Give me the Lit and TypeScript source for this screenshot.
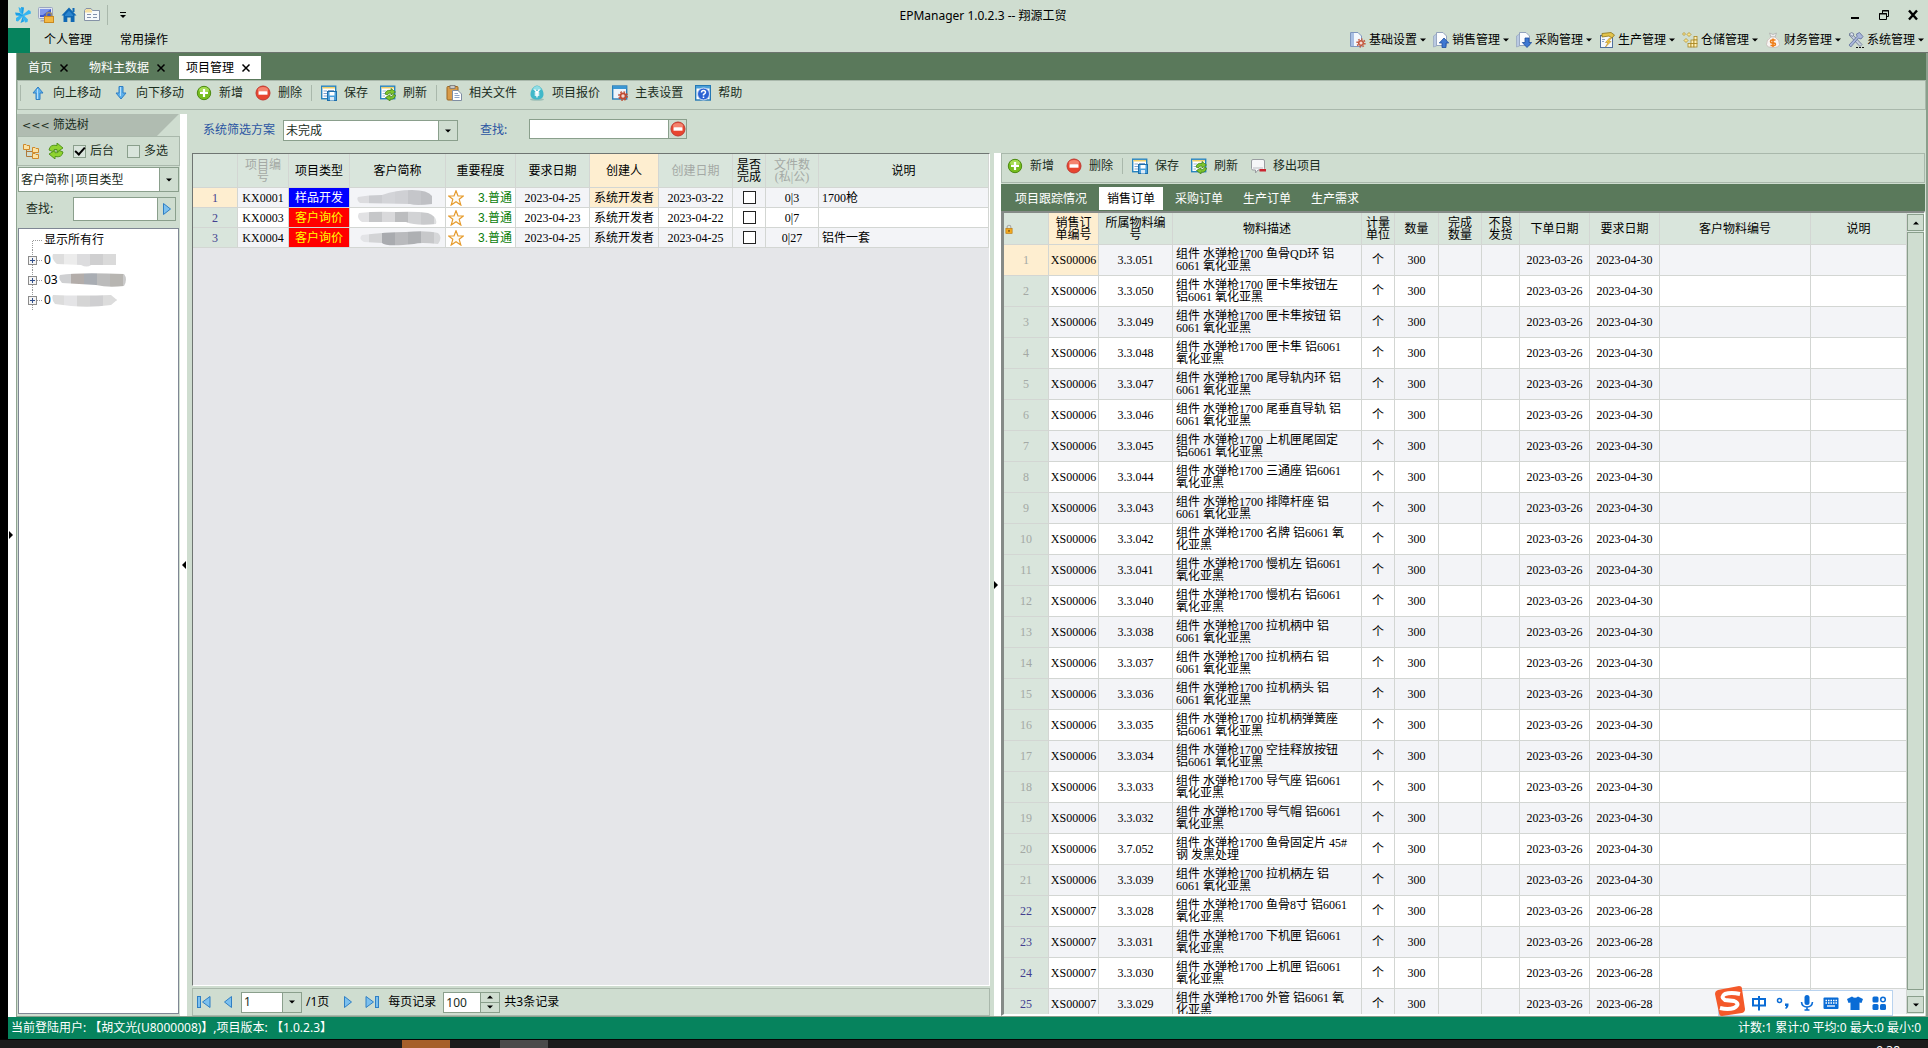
import { LitElement, html, svg, css, nothing, TemplateResult } from "lit";
import { customElement, property } from "lit/decorators.js";
import { classMap } from "lit/directives/class-map.js";

const icons: Record<string, TemplateResult> = {
  fan: svg`<g fill="#35b5f2"><path d="M8 8.500L6 1.500 3.500 0 4.500 5Z"/><path d="M7.500 8L13.500 3 15.500 4 16 6.500 9 9Z"/><path d="M8 7.500L13 12.500 12.500 15 10 15.500 7.500 9Z"/><path d="M8.500 8.500L3 14.500 1 14 1 11 7 7Z"/></g><g fill="#1aa0e8"><path d="M8 8L9 .5 6 0 6.500 5Z"/><path d="M0 5.500L1 8.500 8 9 5 6Z"/><path d="M8 8.500L5.500 16 9 14.500Z"/></g>`,
  screen: svg`<rect x="0.5" y="0.5" width="14" height="11" rx="1" fill="#dfe4f2" stroke="#9aa5c0"/><rect x="2" y="2" width="11" height="8" fill="#4059cc"/><path d="M2 2h11L5 8H2z" fill="#7f97ea"/><path d="M3 13h4v1.500H2z" fill="#aab"/><path d="M8.500 10V8a2.500 2.500 0 0 1 5 0v2" fill="none" stroke="#9b8b6b" stroke-width="1.500"/><rect x="6.500" y="9.500" width="9" height="6" fill="#f2b843" stroke="#c98a22"/>`,
  home: svg`<path d="M8 0.500L15.500 8.500H13.500V15H9.700V10.500H6.300V15H2.500V8.500H.5Z" fill="#0f68b4"/><rect x="11.500" y="1" width="2" height="4" fill="#0f68b4"/><path d="M4 8L8 3.800 12 8V9H4Z" fill="#2d86cf"/>`,
  form: svg`<path d="M.5 13.500V3.500L2 1.500H7L8.500 3.500H15.500V13.500Z" fill="#f7f9fb" stroke="#8592a6"/><path d="M1 5.500V3.500L2.500 2H6.500L8 4V5.500Z" fill="#f6dfa0"/><path d="M3 7.500H7M9 7.500H13M3 10.500H7M9 10.500H13" stroke="#8391ab"/>`,
  up: svg`<path d="M8 2L13 8H10V14.500H6V8H3Z" fill="#5cb0ec" stroke="#2f7fc4"/><path d="M7.500 4V14" stroke="#b5defa"/>`,
  down: svg`<path d="M8 14L13 8H10V1.500H6V8H3Z" fill="#5cb0ec" stroke="#2f7fc4"/><path d="M7.500 2V11" stroke="#b5defa"/>`,
  add: svg`<circle cx="8" cy="8" r="6.700" fill="#76bd1d" stroke="#4c8a12"/><ellipse cx="8" cy="5" rx="5" ry="3" fill="#a6dc55"/><path d="M8 4V12M4 8H12" stroke="#fff" stroke-width="2.200"/>`,
  del: svg`<circle cx="8" cy="8" r="7" fill="#e8452f" stroke="#c03a32"/><ellipse cx="8" cy="4.700" rx="5.200" ry="2.800" fill="#f4846f"/><rect x="3.500" y="6.300" width="9" height="3.400" fill="#fff"/>`,
  save: svg`<rect x=".7" y="1.200" width="14" height="12.500" fill="#fff" stroke="#2884bf" stroke-width="1.400"/><rect x="1.400" y="2" width="12.600" height="1.500" fill="#f2cf6a"/><path d="M2.500 6H6M2.500 8.500H6M2.500 11H6M7 5.500H13" stroke="#7fa3cf" stroke-width="1.200"/><rect x="6.500" y="6.500" width="9" height="9" fill="#4ba0dc" stroke="#1d6eaa"/><rect x="8.500" y="7" width="5" height="3.500" fill="#fff"/><rect x="9" y="12" width="4" height="3.500" fill="#dceaf6"/>`,
  refreshTable: svg`<rect x=".7" y="1.200" width="14" height="12.500" fill="#fff" stroke="#2884bf" stroke-width="1.400"/><rect x="1.400" y="2" width="12.600" height="1.500" fill="#f2cf6a"/><path d="M2.500 6H6M2.500 8.500H5M2.500 11H5" stroke="#9db8d8"/><path d="M5 9Q6 4.500 11 5.500V3.500L15.500 7 11 10V8Q8 7.500 7.500 10Z" fill="#7fc62d" stroke="#3f8216" stroke-width=".8"/><path d="M15.500 10Q14.500 15 10 14.200V16L5.500 12.500 10 9.800V11.800Q13 12.300 13.200 9.500Z" fill="#7fc62d" stroke="#3f8216" stroke-width=".8"/>`,
  refresh: svg`<path d="M1 7Q2 1 9 2.500V0L15 5 9 9V6.500Q5.500 5.500 4.500 8.500Z" fill="#8fd32f" stroke="#4c8f16" stroke-width=".9"/><path d="M15 9Q14 15 7 13.500V16L1 11 7 7.500V9.800Q10.500 10.500 11.500 7.500Z" fill="#8fd32f" stroke="#4c8f16" stroke-width=".9"/>`,
  paste: svg`<rect x="1" y="1.500" width="11" height="13.500" rx="1" fill="#d99b48" stroke="#9b6722"/><rect x="4" y=".5" width="5" height="3" fill="#c9c9c9" stroke="#777" stroke-width=".8"/><path d="M6.500 5.500H12L15.500 9V15.500H6.500Z" fill="#fff" stroke="#7f8da3"/><path d="M8.500 8.500H12M8.500 10.500H13.500M8.500 12.500H13.500" stroke="#90a5c5"/>`,
  quote: svg`<ellipse cx="8" cy="14.500" rx="7" ry="1.300" fill="#9dbfb6"/><path d="M8 .5C11 .5 14.500 5 14.500 9S12 14.500 8 14.500 1.500 13 1.500 9 5 .5 8 .5Z" fill="#41b8c9"/><path d="M3.500 5Q5 1 8 1T12.500 5Z" fill="#8fdde4"/><path d="M5.500 4.500L8 7.500 10.500 4.500M8 7.500V12.500M5.700 8H10.300M5.700 10H10.300" stroke="#fff" stroke-width="1.300" fill="none"/>`,
  config: svg`<rect x=".7" y="1" width="14" height="13" fill="#eef5fb" stroke="#2b7fb8" stroke-width="1.400"/><rect x="1" y="1" width="13.500" height="3" fill="#3a97d3"/><circle cx="11" cy="11" r="2.600" fill="#f0d8d2" stroke="#c04b31" stroke-width="1.800"/><circle cx="11" cy="11" r="4.200" fill="none" stroke="#c04b31" stroke-width="1.400" stroke-dasharray="1.700 1.600"/>`,
  help: svg`<rect x=".7" y=".7" width="14.600" height="14.300" fill="#fff" stroke="#2478b4" stroke-width="1.400"/><rect x="1" y="1" width="14" height="2.500" fill="#4a9fd8"/><circle cx="8.500" cy="9" r="6" fill="#2b62d4" stroke="#cfdcf7"/><path d="M6.500 7.500Q6.500 5.500 8.500 5.500T10.500 7.300Q10.500 8.500 8.500 9.500V10.500M8.500 11.500V13" stroke="#fff" stroke-width="1.500" fill="none"/>`,
  out: svg`<path d="M3 1.500H13Q14.500 1.500 14.500 3V10.500Q14.500 12 13 12H8L5.500 15V12H3Q1.500 12 1.500 10.500V3Q1.500 1.500 3 1.500Z" fill="#f6f6f8" stroke="#9a9da1"/><path d="M3 9H13V11H3Z" fill="#d9dade"/><rect x="9.500" y="11" width="6.500" height="2.500" fill="#c9252f"/>`,
  folders: svg`<g fill="#fbe3a4" stroke="#cf8a2c"><path d="M.5 1.500H3L4 2.500H6.500V6.500H.5Z"/><path d="M9.500 4.500H12L13 5.500H15.500V9.500H9.500Z"/><path d="M9.500 10.500H12L13 11.500H15.500V15.500H9.500Z"/></g><path d="M3.500 7V13.500H9M3.500 8.500H9" stroke="#b0793a" fill="none"/>`,
  docGear: svg`<path d="M.5.500H8L11.500 4V14.500H.5Z" fill="#f3f7fd" stroke="#7f96bf"/><path d="M1 1H4V14H1Z" fill="#a9bfe4"/><circle cx="11" cy="11" r="2.300" fill="#f3dcd6" stroke="#c4553b" stroke-width="1.500"/><circle cx="11" cy="11" r="3.900" fill="none" stroke="#c4553b" stroke-width="1.500" stroke-dasharray="1.500 1.500"/>`,
  docUp: svg`<path d="M3.500.500H10L13.500 4V13.500H3.500Z" fill="#fbfcfe" stroke="#93a3bd"/><path d="M.5 4L3.500 2V14L.5 15Z" fill="#b9c9e2" stroke="#93a3bd" stroke-width=".7"/><path d="M11 6L15.700 11H13V15.500H9V11H6.300Z" fill="#3e78d2" stroke="#1f4f9e" stroke-width=".8"/>`,
  docDown: svg`<path d="M3.500.500H10L13.500 4V13.500H3.500Z" fill="#fbfcfe" stroke="#93a3bd"/><path d="M.5 4L3.500 2V14L.5 15Z" fill="#b9c9e2" stroke="#93a3bd" stroke-width=".7"/><path d="M11 15.500L15.700 10.500H13V6H9V10.500H6.300Z" fill="#3e78d2" stroke="#1f4f9e" stroke-width=".8"/>`,
  produce: svg`<rect x="1.500" y="3.500" width="12" height="12" fill="#f5f8fc" stroke="#51709c"/><path d="M3 1.500L12 .5 15.500 3 13 6 10 4 3 5Z" fill="#e2c34b" stroke="#8d7519" stroke-width=".8"/><path d="M10.500 6L6.500 10.500H9L6.500 15 12 9.500H9.500L12.500 6Z" fill="#f6cf3a" stroke="#b8862a" stroke-width=".6"/><path d="M3 7.500H6M3 9.500H5" stroke="#8ba0c0"/>`,
  store: svg`<g fill="#fff1b8" stroke="#a88620" stroke-width=".8"><rect x="12" y="4.500" width="3" height="3.500"/><rect x="9" y="8" width="3" height="3.500"/><rect x="12" y="8" width="3" height="3.500"/><rect x="6" y="11.500" width="3" height="3.500"/><rect x="9" y="11.500" width="3" height="3.500"/><rect x="12" y="11.500" width="3" height="3.500"/></g><g fill="#fde58a" stroke="#a88620" stroke-width=".7"><path d="M2 .5L3.500 2 2 3.500.5 2ZM7 .5L9 2.500 7 4.500 5 2.500ZM4 6.500L6 8.500 4 10.500 2 8.500Z"/></g>`,
  money: svg`<path d="M4.500 1L8 2.500 11.500 1 10 5H6Z" fill="#eee" stroke="#aaa" stroke-width=".7"/><path d="M6 5H10Q15 8 14.500 12.500Q14 15.500 8 15.500T1.500 12.500Q1 8 6 5Z" fill="#f8f4f2" stroke="#c3b9b4" stroke-width=".8"/><path d="M10.500 8H7Q5.500 8 5.500 9.500T7 11H9Q10.500 11 10.500 12.300T9 13.600H5.500M8 6.500V15" stroke="#ee7c14" stroke-width="1.500" fill="none"/>`,
  tools: svg`<path d="M3 1L1 3 12 14.500 14 12.500Z" fill="#c5cede" stroke="#66758f" stroke-width=".8"/><path d="M1 2Q4-1 6 2L4.500 4.500Z" fill="#dbe2ee" stroke="#66758f" stroke-width=".8"/><path d="M1 13L9 4.500 8.500 2 11.500.500 15 4.500 13 7 10.500 6 2.800 15Z" fill="#a9b7da" stroke="#5d6d9c" stroke-width=".8"/><path d="M8 15.500H10M11 15.500H13M14 15.500H16" stroke="#111"/>`,
  first: svg`<rect x="1.500" y="2.500" width="3" height="11" fill="#7cc0ee" stroke="#2f7fc4"/><path d="M14 2.500V13.500L6.500 8Z" fill="#7cc0ee" stroke="#2f7fc4"/>`,
  prev: svg`<path d="M11.500 2.500V13.500L4.500 8Z" fill="#7cc0ee" stroke="#2f7fc4"/>`,
  next: svg`<path d="M4.500 2.500V13.500L11.500 8Z" fill="#7cc0ee" stroke="#2f7fc4"/>`,
  last: svg`<rect x="11.500" y="2.500" width="3" height="11" fill="#7cc0ee" stroke="#2f7fc4"/><path d="M2 2.500V13.500L9.500 8Z" fill="#7cc0ee" stroke="#2f7fc4"/>`,
  star: svg`<path d="M8 .8L10 6H15.400L11.200 9.300 12.800 15 8 11.700 3.200 15 4.800 9.300.6 6H6Z" fill="#fdfbf5" stroke="#e69b2c" stroke-width="1.200"/>`,
  lock: svg`<path d="M5 8V5a3 3 0 0 1 6 0V8" fill="none" stroke="#a8a8a8" stroke-width="1.800"/><rect x="3" y="7" width="10" height="8" fill="#f2a921" stroke="#b9760d"/><rect x="7" y="9.500" width="2" height="3" fill="#6f450a"/>`,
  min: svg`<path d="M4 11H12" stroke="#000" stroke-width="2"/>`,
  restore: svg`<path d="M6.500 6V3.500H12.500V9.500H11M6 4H13M3.500 6.500H10.500V12.500H3.500ZM3 7H11" fill="none" stroke="#000"/>`,
  close: svg`<path d="M4 3.500L12 12.500M12 3.500L4 12.500" stroke="#000" stroke-width="2.400"/>`,
  x: svg`<path d="M4.500 4.500L11.500 11.500M11.500 4.500L4.500 11.500" stroke="#000" stroke-width="1.500"/>`,
  more: svg`<path d="M5 5.500H11" stroke="#000"/><path d="M5 8H11L8 11Z"/>`,
  imeCn: svg`<rect x="2" y="4" width="12" height="6.500" fill="none" stroke="#0a6cd6" stroke-width="2"/><path d="M8 1V15.500" stroke="#0a6cd6" stroke-width="2"/>`,
  imeDot: svg`<circle cx="4.500" cy="5.500" r="2" fill="none" stroke="#0a6cd6" stroke-width="1.500"/><path d="M10 8.500H13.500Q14 12 11 14L10 13Q11.500 12 11 11H10Z" fill="#0a6cd6"/>`,
  mic: svg`<rect x="5.500" y="0" width="5" height="10" rx="2.500" fill="#0a6cd6"/><path d="M2.500 7Q3 12 8 12T13.500 7M8 12V15M5.500 15H10.500" stroke="#0a6cd6" stroke-width="1.600" fill="none"/>`,
  keyboard: svg`<rect x=".5" y="2.500" width="15" height="11.500" rx="1" fill="#0a6cd6"/><path d="M2.500 5.500H14M2.500 8H14" stroke="#fff" stroke-width="1.300" stroke-dasharray="1.500 1"/><path d="M4 11H12" stroke="#fff" stroke-width="1.300"/>`,
  shirt: svg`<path d="M0 4L5 1.500Q8 4 11 1.500L16 4 14.500 8 12.500 7.500V15H3.500V7.500L1.500 8Z" fill="#0a6cd6"/>`,
  apps: svg`<g fill="#0a6cd6"><rect x="1.500" y="1.500" width="6" height="6" rx="1.500"/><rect x="1.500" y="9" width="6" height="6" rx="1.500"/><rect x="9" y="9" width="6" height="6" rx="1.500"/></g><circle cx="12" cy="4.500" r="2.300" fill="none" stroke="#0a6cd6" stroke-width="1.500"/>`,
};

const icon = (name: string) =>
  html`<svg class="ic" width="16" height="16" viewBox="0 0 16 16" aria-hidden="true">${icons[name]}</svg>`;

const caret = (up = false) =>
  html`<svg class="caret" width="6" height="4" viewBox="0 0 6 4" aria-hidden="true">
    <path d=${up ? "M0 3.500H6L3 .5Z" : "M0 .5H6L3 3.500Z"} fill="#000" />
  </svg>`;

const base = css`
  * { box-sizing: border-box; }
  .ic { display: block; flex: none; }
  .caret { display: block; flex: none; }
  button, input, select { font: inherit; color: inherit; margin: 0; padding: 0; border-radius: 0; }
  button { background: none; border: 0; white-space: nowrap; }
`;

@customElement("tool-bar")
class ToolBar extends LitElement {
  @property({ attribute: false }) items: [string, string][] = [];

  static styles = [base, css`
    :host { display: block; }
    .bar { display: flex; align-items: center; gap: 12px; height: 30px; padding: 0 5px 4px;
      border: 1px solid #a9b8ab; color: #1b2e1e; }
    .tool { display: flex; align-items: center; gap: 7px; height: 18px; }
    .sep { width: 1px; height: 16px; margin: 0 -3px; background: #a9b8ab; }
  `];

  render() {
    return html`<div class="bar" role="toolbar">
      ${this.items.map(([name, label]) => name === "|"
        ? html`<span class="sep"></span>`
        : html`<button class="tool">${icon(name)}<span>${label}</span></button>`)}
    </div>`;
  }
}

@customElement("tab-strip")
class TabStrip extends LitElement {
  @property({ attribute: false }) tabs: string[] = [];
  @property({ type: Number }) active = 0;
  @property({ type: Boolean }) closable = false;

  static styles = [base, css`
    :host { display: block; }
    .strip { display: flex; align-items: flex-end; height: 27px; padding: 0 0 1px 4px; background: #5a795b; }
    .tab { display: flex; align-items: center; height: 23px; padding: 0 8px; margin: 0 2px; color: #fff; }
    .on { background: #fff; color: #000; }
    .closable .tab { padding: 0 7px; margin: 0 3px 0 0; gap: 4px; }
  `];

  render() {
    return html`<div class=${classMap({ strip: true, closable: this.closable })} role="tablist">
      ${this.tabs.map((t, i) => html`<button role="tab" aria-selected=${i === this.active ? "true" : "false"}
        class=${classMap({ tab: true, on: i === this.active })}>
        <span>${t}</span>${this.closable ? icon("x") : nothing}</button>`)}
    </div>`;
  }
}

interface Column { title: string[]; width?: number; dim?: boolean; hot?: boolean; }
const col = (title: string, width?: number, extra: Partial<Column> = {}): Column =>
  ({ title: title.split("/"), width, ...extra });

const gridStyles = css`
  .grid { width: 100%; border-collapse: separate; border-spacing: 0; table-layout: fixed;
    font: 12px/12px "Liberation Serif", "Noto Sans CJK SC", serif; color: #000; }
  .grid th, .grid td { border-right: 1px solid #d3d6d3; border-bottom: 1px solid #d3d6d3;
    padding: 0; text-align: center; font-weight: 400; overflow: hidden; white-space: nowrap; }
  .grid thead th { background: #d9e5dc; }
  .grid tbody th { background: #d9e5dc; color: #443f8f; }
  .grid tbody tr { background: #fff; }
  .grid tbody tr:nth-child(odd) { background: #f3f4f7; }
  .grid .left { text-align: left; padding-left: 3px; }
  .grid .dim { color: #a4a9a5; }
  .grid thead .hot, .grid tbody .hot { background: #feeed0; }
  .grid th .ic { width: 10px; height: 10px; }
`;

const colGroup = (cols: Column[]) => html`<colgroup>
  ${cols.map((c) => html`<col width=${c.width ?? nothing} />`)}
</colgroup>`;

const headCells = (cols: Column[]) => cols.map((c) => html`<th scope="col"
  class=${classMap({ dim: !!c.dim, hot: !!c.hot })}>${c.title[0] === "#lock"
    ? icon("lock")
    : c.title.map((t, i) => html`${i ? html`<br />` : nothing}${t}`)}</th>`);

const blob = (id: string, w: number, cells: string[], edge: string) => html`<svg class="blob" width=${w} height="16"
  viewBox="0 0 ${w} 16" aria-hidden="true">
  <clipPath id=${id}><path d=${edge} /></clipPath>
  <g clip-path="url(#${id})">${cells.map((c, i) => svg`<rect x=${i * 13} y="0" width="13" height="16" fill=${c} />`)}</g>
</svg>`;

const projectCols = [
  col("", 45), col("项目编/号", 51, { dim: true }), col("项目类型", 61), col("客户简称", 96),
  col("重要程度", 70), col("要求日期", 74), col("创建人", 69, { hot: true }),
  col("创建日期", 74, { dim: true }), col("是否/完成", 33), col("文件数/(私|公)", 53, { dim: true }), col("说明"),
];

const projects = [
  { no: "KX0001", kind: "样品开发", need: "2023-04-25", made: "2023-03-22", files: "0|3", note: "1700枪" },
  { no: "KX0003", kind: "客户询价", need: "2023-04-23", made: "2023-04-22", files: "0|7", note: "" },
  { no: "KX0004", kind: "客户询价", need: "2023-04-25", made: "2023-04-25", files: "0|27", note: "铝件一套" },
];

const masks = [
  blob("p0", 78, ["#dcdcdf", "#cbccd0", "#d3d4d8", "#cfd0d4", "#c5c6ca", "#bfc0c4"], "M2 7Q12 5 26 5Q40 0 56 0Q72 0 76 6V14Q60 16 54 14L4 13Q0 10 2 7Z"),
  blob("p1", 82, ["#e2e2e4", "#c6c7c9", "#d9d9db", "#bcbdbf", "#d2d3d5", "#c9cacc", "#dedfe0"], "M3 3Q20 1 40 2Q60 1 72 3Q82 7 80 14Q60 16 50 12L6 12Q0 8 3 3Z"),
  blob("p2", 86, ["#e3e4e7", "#d3d4d6", "#a9abaf", "#b9babd", "#aeb0b3", "#c7c8ca", "#d6d7d9"], "M6 5Q30 2 50 2Q70 0 82 3Q87 7 82 14Q64 12 58 14Q30 17 26 13L8 12Q2 9 6 5Z"),
];

@customElement("project-grid")
class ProjectGrid extends LitElement {
  static styles = [base, gridStyles, css`
    :host { display: block; }
    .frame { height: 100%; background: #e5e6e9; border-top: 1px solid #6f7572; border-left: 1px solid #6f7572;
      border-right: 1px solid #fff; border-bottom: 1px solid #fff; overflow: hidden; }
    thead th { height: 34px; }
    tbody th, tbody td { height: 20px; }
    .grid .kind { background: #f00; color: #ff0; }
    .grid .dev { background: #00f; color: #fff; }
    .level { display: flex; align-items: center; justify-content: space-between; padding: 0 3px 0 2px; color: #0a7d0a; background: #fff; height: 19px;
      font-family: "Liberation Sans", "Noto Sans CJK SC", sans-serif; }
    .box { appearance: none; display: block; width: 13px; height: 13px; margin: 0 auto; border: 1px solid #222; background: #fff; }
    .mask { display: flex; align-items: center; padding-left: 6px; height: 19px; }
    .blob { display: block; }
  `];

  render() {
    return html`<div class="frame"><table class="grid">
      ${colGroup(projectCols)}
      <thead><tr>${headCells(projectCols)}</tr></thead>
      <tbody>${projects.map((p, i) => html`<tr>
        <th scope="row" class=${classMap({ hot: i === 0 })}>${i + 1}</th>
        <td>${p.no}</td>
        <td class=${classMap({ kind: true, dev: i === 0 })}>${p.kind}</td>
        <td><div class="mask">${masks[i]}</div></td>
        <td><div class="level">${icon("star")}<span>3.普通</span></div></td>
        <td>${p.need}</td>
        <td class=${classMap({ hot: i === 0 })}>系统开发者</td>
        <td>${p.made}</td>
        <td><input class="box" type="checkbox" aria-label="是否完成" /></td>
        <td>${p.files}</td>
        <td class="left">${p.note}</td>
      </tr>`)}</tbody>
    </table></div>`;
  }
}

const orderCols = [
  col("#lock", 45), col("销售订/单编号", 50, { hot: true }), col("所属物料编/号", 74), col("物料描述", 189),
  col("计量/单位", 33), col("数量", 44), col("完成/数量", 43), col("不良/发货", 38),
  col("下单日期", 70), col("要求日期", 70), col("客户物料编号", 151), col("说明"),
];

const orders: [string, string][] = [
  ["3.3.051", "鱼骨QD环 铝/6061 氧化亚黑"], ["3.3.050", "匣卡隼按钮左/铝6061 氧化亚黑"],
  ["3.3.049", "匣卡隼按钮 铝/6061 氧化亚黑"], ["3.3.048", "匣卡隼 铝6061/氧化亚黑"],
  ["3.3.047", "尾导轨内环 铝/6061 氧化亚黑"], ["3.3.046", "尾垂直导轨 铝/6061 氧化亚黑"],
  ["3.3.045", "上机匣尾固定/铝6061 氧化亚黑"], ["3.3.044", "三通座 铝6061/氧化亚黑"],
  ["3.3.043", "排障杆座 铝/6061 氧化亚黑"], ["3.3.042", "名牌 铝6061 氧/化亚黑"],
  ["3.3.041", "慢机左 铝6061/氧化亚黑"], ["3.3.040", "慢机右 铝6061/氧化亚黑"],
  ["3.3.038", "拉机柄中 铝/6061 氧化亚黑"], ["3.3.037", "拉机柄右 铝/6061 氧化亚黑"],
  ["3.3.036", "拉机柄头 铝/6061 氧化亚黑"], ["3.3.035", "拉机柄弹簧座/铝6061 氧化亚黑"],
  ["3.3.034", "空挂释放按钮/铝6061 氧化亚黑"], ["3.3.033", "导气座 铝6061/氧化亚黑"],
  ["3.3.032", "导气帽 铝6061/氧化亚黑"], ["3.7.052", "鱼骨固定片 45#/钢 发黑处理"],
  ["3.3.039", "拉机柄左 铝/6061 氧化亚黑"], ["3.3.028", "鱼骨8寸 铝6061/氧化亚黑"],
  ["3.3.031", "下机匣 铝6061/氧化亚黑"], ["3.3.030", "上机匣 铝6061/氧化亚黑"],
  ["3.3.029", "外管 铝6061 氧/化亚黑"],
];

@customElement("order-grid")
class OrderGrid extends LitElement {
  static styles = [base, gridStyles, css`
    :host { display: block; }
    .frame { display: flex; height: 100%; border-top: 2px solid #858a87; border-left: 3px solid #858a87;
      border-right: 1px solid #fff; border-bottom: 2px solid #fff; overflow: hidden; }
    .view { flex: 1; min-width: 0; height: 100%; overflow: hidden; background: #fff; }
    thead th { height: 32px; }
    tbody th, tbody td { height: 31px; }
    .grid tbody th.dim { color: #a4a9a5; }
    .scroll { flex: none; width: 17px; display: flex; flex-direction: column; padding: 1px 0; background: #d9e5dc; gap: 1px; }
    .arrow { display: flex; align-items: center; justify-content: center; height: 17px; border: 1px solid #8a9f8c; background: #cfddd0; }
    .thumb { flex: 1; margin-bottom: 5px; border: 1px solid #8a9f8c; background: #cfddd0; }
  `];

  render() {
    return html`<div class="frame">
      <div class="view"><table class="grid">
        ${colGroup(orderCols)}
        <thead><tr>${headCells(orderCols)}</tr></thead>
        <tbody>${orders.map(([code, text], i) => {
          const [a, b] = text.split("/");
          const late = i > 20;
          return html`<tr>
            <th scope="row" class=${classMap({ hot: i === 0, dim: !late })}>${i + 1}</th>
            <td class=${classMap({ hot: i === 0 })}>${late ? "XS00007" : "XS00006"}</td>
            <td>${code}</td>
            <td class="left">组件 水弹枪1700 ${a}<br />${b}</td>
            <td>个</td><td>300</td><td></td><td></td>
            <td>2023-03-26</td><td>${late ? "2023-06-28" : "2023-04-30"}</td><td></td><td></td>
          </tr>`;
        })}</tbody>
      </table></div>
      <div class="scroll">
        <button class="arrow" aria-label="向上滚动">${caret(true)}</button>
        <div class="thumb"></div>
        <button class="arrow" aria-label="向下滚动">${caret()}</button>
      </div>
    </div>`;
  }
}

const menus: [string, string][] = [
  ["docGear", "基础设置"], ["docUp", "销售管理"], ["docDown", "采购管理"], ["produce", "生产管理"],
  ["store", "仓储管理"], ["money", "财务管理"], ["tools", "系统管理"],
];

const treeMasks: [string, TemplateResult][] = [
  ["0", blob("t0", 66, ["#dedede", "#ececec", "#dcdcde", "#cfcfd0", "#dadada"], "M2 2H66V13H40Q36 16 30 13L6 12Q0 7 2 2Z")],
  ["03", blob("t1", 70, ["#cfd0d2", "#b3adaa", "#a9adb3", "#bcbcbc", "#b7b5b1", "#cacaca"], "M2 3Q20 0 66 2Q70 7 66 14Q50 16 38 13L4 11Q0 7 2 3Z")],
  ["0", blob("t2", 66, ["#dcdcdc", "#e4e4e6", "#d5d5d5", "#cfcfd1", "#dcdcdc", "#cccccc"], "M2 3Q30 4 60 3L66 8L60 13Q40 16 20 14L4 12Q0 7 2 3Z")],
];

@customElement("app-root")
class AppRoot extends LitElement {
  static styles = [base, css`
    :host { display: block; height: 100vh; overflow: hidden; background: #000;
      font: 12px/16px "Noto Sans", "Noto Sans CJK SC", sans-serif; color: #000; }
    .page { display: flex; flex-direction: column; height: 100%; }
    .window { flex: 1; min-height: 0; margin-left: 8px; display: flex; flex-direction: column; background: #cfddd0; position: relative; }
    .title { display: grid; grid-template-columns: 1fr auto 1fr; align-items: center; height: 28px; padding-top: 1px; }
    .quick { display: flex; align-items: center; gap: 7px; padding-left: 7px; }
    .quick .sep { width: 1px; height: 20px; background: #a9b8ab; }
    .winbtns { display: flex; justify-content: flex-end; gap: 13px; padding-right: 7px; }
    .caption { margin: 0; padding: 2px 0 0 30px; font: inherit; }
    .menu { display: flex; align-items: center; height: 25px; border-bottom: 1px solid #6c746e; }
    .file { width: 22px; height: 25px; background: #06835d; }
    .word { padding: 0 14px; }
    .modules { flex: 1; display: flex; justify-content: flex-end; gap: 7px; padding-right: 4px; }
    .module { display: flex; align-items: center; gap: 3px; }
    .work { flex: 1; min-height: 0; display: flex; }
    .edge { width: 8px; display: flex; align-items: center; background: #fff; }
    .body { flex: 1; min-width: 0; display: flex; flex-direction: column; border-right: 2px solid #8a9f8c; border-left: 1px solid #8fa491; border-bottom: 1px solid #8a9f8c; }
    .panes { flex: 1; min-height: 0; display: flex; padding-top: 4px; }
    .side { width: 163px; flex: none; display: flex; flex-direction: column; }
    .sidehead { height: 23px; padding: 3px 5px; line-height: 16px; color: #1b2e1e;
      background: linear-gradient(135deg, #b0bcb1 114px, #cfddd0 115px); border-bottom: 1px solid #a9b8ab; }
    .sidehead h2 { margin: 0; font: inherit; }
    .chev { font-family: "DejaVu Sans", sans-serif; font-size: 11px; }
    .sidetools { display: flex; align-items: center; height: 29px; padding: 0 5px; gap: 9px; border: 1px solid #a9b8ab; border-top: 0; color: #1b2e1e; }
    .check { display: flex; align-items: center; gap: 4px; margin-right: 4px; }
    .check input { appearance: none; display: grid; place-items: center; width: 13px; height: 13px; border: 1px solid #8a9f8c; background: #d9e5dc; }
    .check input:checked::after { content: ""; width: 4px; height: 8px; margin-top: -2px; border: solid #000; border-width: 0 2px 2px 0; transform: rotate(42deg); }
    .drop { display: grid; grid-template-columns: 1fr 19px; border: 1px solid #8a9f8c; background: #cfddd0; color: #1b2e1e; }
    .drop select { grid-area: 1 / 1 / 2 / 3; appearance: none; border: 0; outline: 0; padding-left: 2px; height: 19px;
      background: linear-gradient(90deg, #fff calc(100% - 19px), #8a9f8c 0, #8a9f8c calc(100% - 18px), #cfddd0 0); }
    .drop .caret { grid-area: 1 / 2; place-self: center; pointer-events: none; }
    .sidedrop { margin: 1px 1px 0; }
    .sidedrop select { height: 23px; }
    .find { display: flex; align-items: center; height: 34px; padding: 0 4px 0 9px; }
    .find label { flex: none; width: 47px; color: #1b2e1e; }
    .find .combo { flex: 1; min-width: 0; }
    .combo { display: flex; border: 1px solid #8a9f8c; }
    .combo input { flex: 1; width: 0; min-width: 0; border: 0; outline: 0; height: 22px; padding: 0 2px; background: #fff; }
    .combo button { flex: none; display: grid; place-items: center; width: 18px; border-left: 1px solid #8a9f8c; }
    .tree { flex: 1; margin: 2px 1px; padding: 1px 9px; background: #fff; border: 1px solid #7f8794; list-style: none; overflow: hidden; }
    .tree li { display: flex; align-items: center; height: 20px; }
    .tree .root { padding-left: 16px; }
    .tree .stub { margin-left: -12px; margin-right: 2px; }
    .tree svg { display: block; flex: none; }
    .split { width: 7px; flex: none; display: flex; align-items: center; background: #fff; }
    .main { flex: 1; min-width: 0; display: flex; flex-direction: column; }
    .filter { display: flex; align-items: flex-start; height: 39px; padding: 5px 16px 0; color: #2b55a2; }
    .filter label { flex: none; margin-top: 3px; }
    .scheme { width: 175px; margin: 1px 22px 0 8px; }
    .search { width: 158px; margin-left: 22px; }
    .search input { height: 18px; }
    .pair { flex: 1; min-height: 0; display: grid; grid-template-columns: minmax(0, 807fr) 7px minmax(0, 925fr); grid-template-rows: minmax(0, 1fr); }
    .mid { display: flex; flex-direction: column; padding: 0 4px 0 5px; min-height: 0; }
    .mid project-grid { flex: 1; min-height: 0; }
    .pager { display: flex; align-items: center; height: 28px; margin-top: 2px; padding: 0 3px; border: 1px solid #a9b8ab; }
    .pager button { height: 20px; }
    .prev { margin: 0 5px 0 8px; }
    .pagedrop { width: 61px; margin-right: 4px; }
    .next { margin: 0 8px 0 11px; }
    .size { margin: 0 7px 0 8px; }
    .spin { display: flex; width: 57px; border: 1px solid #8a9f8c; margin-right: 4px; color: #1b2e1e; }
    .spin input { flex: 1; width: 0; min-width: 0; height: 19px; border: 0; outline: 0; padding: 0 2px; }
    .arrows { display: flex; flex-direction: column; width: 19px; border-left: 1px solid #8a9f8c; }
    .pager .arrows button { flex: 1; height: 9px; display: grid; place-items: center; }
    .pager .arrows button + button { border-top: 1px solid #8a9f8c; }
    .right { display: flex; flex-direction: column; min-height: 0; padding-right: 1px; }
    .right tab-strip { margin-top: 1px; }
    .right order-grid { flex: 1; min-height: 0; }
    .status { display: flex; justify-content: space-between; align-items: center; height: 22px; padding: 0 7px 0 3px; background: #06835d; color: #fff; }
    .taskbar { flex: none; height: 9px; display: flex; padding-left: 402px; background: #1c1c1c; border-top: 1px solid #050505; overflow: hidden; }
    .task { width: 48px; height: 9px; background: #a65f2a; margin-right: 50px; }
    .task.idle { background: #4b4b4b; }
    .clock { margin: 3px 28px 0 auto; color: #fff; }
    .ime { position: absolute; right: 35px; bottom: 23px; display: flex; align-items: center; gap: 8px; height: 26px;
      padding: 0 5px 0 32px; background: #fff; border: 1px solid #b9d3ef; }
    .sogou { position: absolute; left: -5px; bottom: -2px; }
  `];

  render() {
    return html`<div class="page">
      <div class="window">
        <header class="title">
          <div class="quick">
            ${["fan", "screen", "home", "form"].map((n) => html`<button aria-label=${n}>${icon(n)}</button>`)}
            <span class="sep"></span><button aria-label="更多">${icon("more")}</button>
          </div>
          <h1 class="caption">EPManager 1.0.2.3 -- 翔源工贸</h1>
          <div class="winbtns">
            <button aria-label="最小化">${icon("min")}</button>
            <button aria-label="还原">${icon("restore")}</button>
            <button aria-label="关闭">${icon("close")}</button>
          </div>
        </header>
        <nav class="menu">
          <button class="file" aria-label="文件"></button>
          <button class="word">个人管理</button><button class="word">常用操作</button>
          <div class="modules">${menus.map(([n, t]) => html`<button class="module">${icon(n)}<span>${t}</span>${caret()}</button>`)}</div>
        </nav>
        <div class="work">
          <div class="edge"><svg width="8" height="20" viewBox="0 0 8 20" aria-hidden="true"><path d="M1 6V14L5 10Z" /></svg></div>
          <div class="body">
            <tab-strip .tabs=${["首页", "物料主数据", "项目管理"]} active="2" closable></tab-strip>
            <tool-bar .items=${[["|", ""], ["up", "向上移动"], ["down", "向下移动"], ["add", "新增"], ["del", "删除"], ["|", ""],
              ["save", "保存"], ["refreshTable", "刷新"], ["|", ""], ["paste", "相关文件"], ["quote", "项目报价"],
              ["config", "主表设置"], ["help", "帮助"]]}></tool-bar>
            <div class="panes">
              <aside class="side">
                <div class="sidehead"><h2><span class="chev">&lt;&lt;&lt;</span> 筛选树</h2></div>
                <div class="sidetools">
                  <button aria-label="展开">${icon("folders")}</button>
                  <button aria-label="刷新">${icon("refresh")}</button>
                  <label class="check"><input type="checkbox" checked />后台</label>
                  <label class="check"><input type="checkbox" />多选</label>
                </div>
                <div class="drop sidedrop"><select aria-label="分组"><option>客户简称|项目类型</option></select>${caret()}</div>
                <div class="find"><label for="sf">查找:</label>
                  <div class="combo"><input id="sf" type="text" /><button aria-label="查找">${icon("next")}</button></div></div>
                <ul class="tree">
                  <li class="root">
                    <svg class="stub" width="10" height="20" viewBox="0 0 10 20" aria-hidden="true"><path d="M.5 20V10.500H10" fill="none" stroke="#999" stroke-dasharray="1 1" /></svg><span>显示所有行</span></li>
                  ${treeMasks.map(([t, m]) => html`<li>
                    <svg width="16" height="20" viewBox="0 0 16 20" aria-hidden="true">
                      <path d="M4.500 0V5M4.500 15V20M9 10.500H14" stroke="#999" stroke-dasharray="1 1" />
                      <rect x=".5" y="6.500" width="8" height="8" fill="#f4f4f4" stroke="#8b8b8b" />
                      <path d="M2 10.500H7M4.500 8V13" stroke="#33508c" /></svg>
                    <span>${t}</span>${m}</li>`)}
                </ul>
              </aside>
              <div class="split"><svg width="7" height="20" viewBox="0 0 7 20" aria-hidden="true"><path d="M6 6V14L2 10Z" /></svg></div>
              <main class="main">
                <div class="filter">
                  <label for="scheme">系统筛选方案</label>
                  <div class="drop scheme"><select id="scheme"><option>未完成</option></select>${caret()}</div>
                  <label for="q">查找:</label>
                  <div class="combo search"><input id="q" type="text" /><button aria-label="清除">${icon("del")}</button></div>
                </div>
                <div class="pair">
                  <section class="mid">
                    <project-grid></project-grid>
                    <div class="pager">
                      <button aria-label="首页">${icon("first")}</button>
                      <button class="prev" aria-label="上一页">${icon("prev")}</button>
                      <div class="drop pagedrop"><select aria-label="页码"><option>1</option></select>${caret()}</div>
                      <span>/1页</span>
                      <button class="next" aria-label="下一页">${icon("next")}</button>
                      <button aria-label="末页">${icon("last")}</button>
                      <label class="size" for="ps">每页记录</label>
                      <div class="spin"><input id="ps" type="text" value="100" />
                        <span class="arrows"><button aria-label="增加">${caret(true)}</button><button aria-label="减少">${caret()}</button></span></div>
                      <span>共3条记录</span>
                    </div>
                  </section>
                  <div class="split"><svg width="7" height="20" viewBox="0 0 7 20" aria-hidden="true"><path d="M0 6V14L4 10Z" /></svg></div>
                  <section class="right">
                    <tool-bar .items=${[["add", "新增"], ["del", "删除"], ["|", ""], ["save", "保存"], ["refreshTable", "刷新"], ["out", "移出项目"]]}></tool-bar>
                    <tab-strip .tabs=${["项目跟踪情况", "销售订单", "采购订单", "生产订单", "生产需求"]} active="1"></tab-strip>
                    <order-grid></order-grid>
                  </section>
                </div>
              </main>
            </div>
          </div>
        </div>
        <footer class="status">
          <span>当前登陆用户: 【胡文光(U8000008)】,项目版本: 【1.0.2.3】</span>
          <span>计数:1 累计:0 平均:0 最大:0 最小:0</span>
        </footer>
        <div class="ime">
          <svg class="sogou" width="32" height="32" viewBox="0 0 32 32" aria-hidden="true">
            <path d="M4 5L25 1Q28 1 28 4L31 24Q31 27 28 28L8 31Q5 31 5 28L1 9Q1 6 4 5Z" fill="#f4592a" />
            <path d="M26 9Q17 7 11 9Q6 12 11 15L20 16Q27 19 20 23Q14 25 6 23" fill="none" stroke="#fff" stroke-width="4" />
          </svg>
          ${["imeCn", "imeDot", "mic", "keyboard", "shirt", "apps"].map((n) => html`<button aria-label=${n}>${icon(n)}</button>`)}
        </div>
      </div>
      <div class="taskbar"><span class="task"></span><span class="task idle"></span><span class="clock">9:38</span></div>
    </div>`;
  }
}
